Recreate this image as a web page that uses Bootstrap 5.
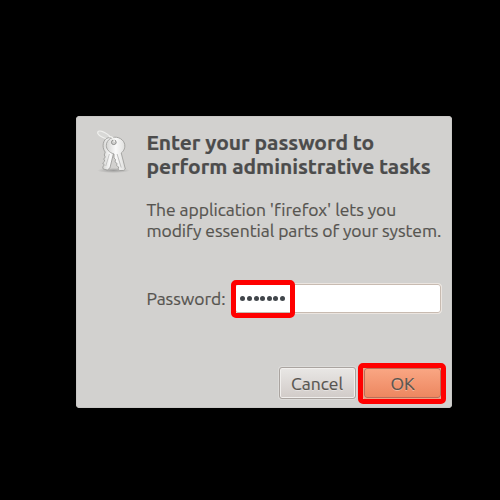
<!DOCTYPE html>
<html lang="en">
<head>
<meta charset="utf-8">
<meta name="viewport" content="width=device-width, initial-scale=1">
<title>Authenticate</title>
<link href="https://cdn.jsdelivr.net/npm/bootstrap@5.3.0/dist/css/bootstrap.min.css" rel="stylesheet">
<style>
body{background:#000;color:#56544f;font-family:Ubuntu,"Noto Sans",sans-serif;height:500px;overflow:hidden;padding:116px 0 0 76px}
.auth-dialog{width:376px;height:292px;background:#d2d1cf;border-radius:4px;padding:14px 10px 9px 20px;box-shadow:inset 0 0 0 1px #c9c8c6;-webkit-text-stroke:.2px;letter-spacing:-.045px}
.auth-icon{width:35px;height:44px;margin-right:15.400px;flex:none}
.auth-title{font-size:21px;line-height:24px;font-weight:700;color:#4c4c4c;margin:0}
.auth-text{font-size:17.5px;line-height:20.5px;margin:22px 0 0}
.auth-title span,.auth-text span{display:block;white-space:nowrap}
.pw-row{margin:42px 0 0 50.400px;height:31px}
.pw-label{font-size:17.5px;line-height:31px;width:87.600px;white-space:nowrap}
.pw-wrap{width:208px;height:31px}
.pw-field{height:31px;background:#fff;border:1px solid #ebe5e0;border-radius:4px;box-shadow:inset 0 0 0 1px #c8bbb1;padding:0 0 0 5.500px;gap:1.600px}
.dot{width:5px;height:5px;border-radius:50%;background:#41464b}
.ring{position:absolute;border:5px solid #f00;border-radius:5px}
.ring-pw{left:-3px;top:-3px;width:64px;height:38px}
.ring-ok{left:-4px;top:-4px;width:88px;height:41px}
.dlg-btn{font-size:17.5px;line-height:29px;height:32px;padding:0;border-radius:3px;color:#56544f!important;text-shadow:0 1px 0 #ffffff60}
.dlg-cancel{width:77px;border:1px solid #aaa4a0!important;background:linear-gradient(#e9e7e5,#d1cbc8)!important;box-shadow:inset 0 0 0 1px #f1efed,0 0 0 1px #dcdbd9;padding-right:1px}
.ok-wrap{margin-left:6px;width:80px}
.dlg-ok{width:77px;height:30px;line-height:28px;padding-top:1px;margin:1px 0 0 2px;border:1px solid #b8705a!important;background:linear-gradient(#f9a683,#ed8760)!important;box-shadow:0 0 0 2px #f0a080}
</style>
</head>
<body>
<main class="auth-dialog d-flex flex-column">
  <div class="d-flex">
    <svg class="auth-icon" viewBox="0 0 34 44" preserveAspectRatio="none" aria-hidden="true">
      <defs>
        <linearGradient id="metal" x1="0" x2="1"><stop stop-color="#d4d4d2"/><stop offset=".5" stop-color="#fafafa"/><stop offset="1" stop-color="#dededc"/></linearGradient>
        <radialGradient id="shade"><stop stop-color="#777" stop-opacity=".6"/><stop offset="1" stop-color="#777" stop-opacity="0"/></radialGradient>
      </defs>
      <ellipse cx="17" cy="40.500" rx="16" ry="2.600" fill="url(#shade)"/>
      <ellipse cx="7.500" cy="5" rx="6.500" ry="2.600" transform="rotate(28 7.500 5)" fill="#d8d8d6" stroke="#efefed" stroke-width="1.300"/>
      <g fill="url(#metal)" stroke="#989896" stroke-width=".8" stroke-linejoin="round">
        <path d="M10 8.500c5-2.500 11 1 11 7.500 0 4-2 6-4 7.500L13.500 38l-2.500 2-4-1-.5-2 1.500-2-1.500-2 2-2-1-2 1.500-2-1-2 1-3C6.500 19.500 5.500 12 10 8.500z"/>
        <path d="M14 8.500c5-3 11.500-.5 13.500 4.500 1.500 4.500-.5 8-3 10l4 16-1.500 1.500h-4L21.500 39l.5-2-2-1.500.5-2-2-1.500.5-2.500-1.500-1.500V24c-5-1.500-7.500-5-7.500-8.500 0-3 1.500-5.500 4-7z"/>
      </g>
      <path d="m20.500 24 4 13.500" fill="none" stroke="#b4b4b2" stroke-width=".8"/>
      <path d="m13 24-3.500 12" fill="none" stroke="#b4b4b2" stroke-width=".7"/>
      <circle cx="17.300" cy="12.300" r="2.300" fill="#cfcfcd" stroke="#8b8b89" stroke-width=".9"/>
      <path d="M12.500 6.500c3.500 0 5.500 2 5.300 5.500" fill="none" stroke="#f2f2f0" stroke-width="1.300"/>
    </svg>
    <div>
      <h1 class="auth-title"><span>Enter your password to</span><span>perform administrative tasks</span></h1>
      <p class="auth-text"><span>The application 'firefox' lets you</span><span>modify essential parts of your system.</span></p>
    </div>
  </div>
  <div class="pw-row d-flex">
    <div class="pw-label">Password:</div>
    <div class="pw-wrap position-relative">
      <div class="pw-field d-flex align-items-center"><i class="dot"></i><i class="dot"></i><i class="dot"></i><i class="dot"></i><i class="dot"></i><i class="dot"></i><i class="dot"></i></div>
      <div class="ring ring-pw"></div>
    </div>
  </div>
  <div class="d-flex justify-content-end mt-auto">
    <button type="button" class="btn dlg-btn dlg-cancel">Cancel</button>
    <div class="position-relative ok-wrap">
      <button type="button" class="btn dlg-btn dlg-ok d-block">OK</button>
      <div class="ring ring-ok"></div>
    </div>
  </div>
</main>
<script src="https://cdn.jsdelivr.net/npm/bootstrap@5.3.0/dist/js/bootstrap.bundle.min.js"></script>
</body>
</html>
